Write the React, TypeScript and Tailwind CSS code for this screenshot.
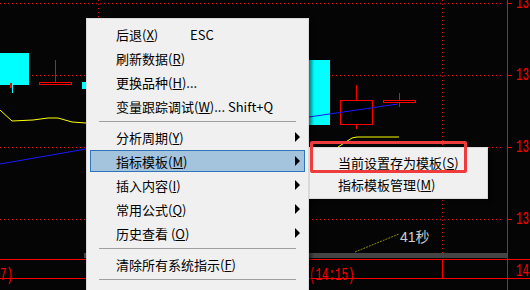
import React from 'react';

type Item =
  | { kind: 'sep' }
  | { kind: 'item'; label: string; key: string; tail?: string; shortcut?: string; sub?: boolean; active?: boolean };

const menu: Item[] = [
  { kind: 'item', label: '后退(', key: 'X', tail: ')', shortcut: 'ESC' },
  { kind: 'item', label: '刷新数据(', key: 'R', tail: ')' },
  { kind: 'item', label: '更换品种(', key: 'H', tail: ')...' },
  { kind: 'item', label: '变量跟踪调试(', key: 'W', tail: ')... Shift+Q' },
  { kind: 'sep' },
  { kind: 'item', label: '分析周期(', key: 'Y', tail: ')', sub: true },
  { kind: 'item', label: '指标模板(', key: 'M', tail: ')', sub: true, active: true },
  { kind: 'item', label: '插入内容(', key: 'I', tail: ')', sub: true },
  { kind: 'item', label: '常用公式(', key: 'Q', tail: ')', sub: true },
  { kind: 'item', label: '历史查看 (', key: 'O', tail: ')', sub: true },
  { kind: 'sep' },
  { kind: 'item', label: '清除所有系统指示(', key: 'F', tail: ')' },
  { kind: 'sep' },
];

const gridY = [3, 75, 147, 219];
const mono = { fontFamily: '"Liberation Mono", monospace' };

function Arrow() {
  return (
    <svg width="6" height="10" viewBox="0 0 6 10" className="ml-auto">
      <polygon points="0,0 5,5 0,10" fill="#000" />
    </svg>
  );
}

function Chart() {
  return (
    <svg width="530" height="290" className="absolute inset-0" shapeRendering="crispEdges">
      {/* grid */}
      {gridY.map((y) => (
        <g key={y}>
          <line x1="0" y1={y + 0.5} x2="503" y2={y + 0.5} stroke="#e01010" strokeDasharray="1 3" />
          <line x1="507" y1={y + 0.5} x2="512" y2={y + 0.5} stroke="#ff0000" />
        </g>
      ))}
      <line x1="98.5" y1="0" x2="98.5" y2="20" stroke="#e01010" strokeDasharray="1 3" />
      <line x1="442.5" y1="0" x2="442.5" y2="259" stroke="#e01010" strokeDasharray="1 3" />
      <line x1="507.5" y1="0" x2="507.5" y2="290" stroke="#ff0000" />
      <line x1="0" y1="259.5" x2="530" y2="259.5" stroke="#ff0000" />
      <line x1="0" y1="278.5" x2="530" y2="278.5" stroke="#ff0000" />
      <line x1="442.5" y1="259" x2="442.5" y2="278" stroke="#ff0000" />
      <rect x="84" y="253" width="423" height="5" fill="#444" />

      {/* candles */}
      <rect x="0" y="53" width="29" height="32" fill="#00ffff" />
      <rect x="10" y="83" width="2" height="5" fill="#ff0000" />
      <line x1="12.5" y1="85" x2="12.5" y2="93" stroke="#00ffff" />
      <line x1="55.5" y1="60" x2="55.5" y2="82" stroke="#ff0000" />
      <rect x="39.5" y="82.5" width="32" height="2" fill="none" stroke="#ff0000" />
      <rect x="82" y="82" width="6" height="7" fill="#00ffff" />
      <rect x="300" y="60" width="30" height="65" fill="#00ffff" />
      <line x1="356.5" y1="85" x2="356.5" y2="129" stroke="#ff0000" />
      <rect x="340.5" y="100.5" width="32" height="24" fill="#000" stroke="#ff0000" />
      <line x1="399.5" y1="93" x2="399.5" y2="107" stroke="#ff0000" />
      <rect x="383.5" y="100.5" width="32" height="2" fill="#000" stroke="#ff0000" />

      {/* indicator lines */}
      <polyline
        points="0,110 12,121 33,120 48,118 58,118 72,122 86,123"
        fill="none"
        stroke="#ffff00"
        shapeRendering="auto"
      />
      <polyline points="338,147 352,138 357,137 399,137" fill="none" stroke="#ffff00" shapeRendering="auto" />
      <polyline points="0,164 86,149 309,117 398,104" fill="none" stroke="#1a1aff" shapeRendering="auto" />
      <line x1="355" y1="252" x2="399" y2="234" stroke="#8a8a10" strokeDasharray="2 1" shapeRendering="auto" />
    </svg>
  );
}

function Label({ text }: { text: string }) {
  return (
    <span
      className="inline-block shrink-0 origin-left scale-x-[0.6] text-[18px] leading-none whitespace-nowrap text-[#ff0000]"
      style={mono}
    >
      {text}
    </span>
  );
}

export default function App() {
  return (
    <div className="relative h-[290px] w-[530px] overflow-hidden bg-[#050505]">
      <Chart />

      {/* price axis */}
      <div className="absolute left-[516px] top-[-6px] flex flex-col">
        {['13', '13', '13', '13'].map((t, i) => (
          <div key={i} className="flex h-[72px] items-start">
            <Label text={t} />
          </div>
        ))}
      </div>

      {/* time axis */}
      <div className="absolute left-0 top-[262px] flex items-start">
        <div className="w-[309px] shrink-0">
          <Label text="7)" />
        </div>
        <div className="w-[207px] shrink-0">
          <Label text="(14:15)" />
        </div>
        <Label text="14" />
      </div>

      <span
        className="absolute left-[400px] top-[230px] text-[14px] leading-none text-[#cfcfcf]"
        style={{ fontFamily: '"Liberation Sans", "Noto Sans CJK SC", sans-serif' }}
      >
        41秒
      </span>

      {/* context menu */}
      <div
        className="absolute left-[86px] top-[18px] w-[223px] border border-[#dadada] bg-[#f0f0f0] px-[3px] pt-[3px] pb-6 text-[13px] leading-none text-black shadow-[3px_3px_3px_rgba(0,0,0,0.45)]"
        style={{ fontFamily: '"Noto Sans CJK SC", "Liberation Sans", sans-serif' }}
      >
        {menu.map((m, i) =>
          m.kind === 'sep' ? (
            <div key={i} className="mx-[9px] flex h-[7px] items-center">
              <div className="h-px w-full bg-[#a0a0a0]" />
            </div>
          ) : (
            <div key={i} className="flex h-6 items-center py-px">
              <div
                className={
                  'flex h-[22px] w-full items-center pl-[25px] pr-[3px] ' +
                  (m.active ? 'border border-[#2f73b8] bg-[#a4c4de]' : 'border border-transparent')
                }
              >
                <span className={m.shortcut ? 'w-[74px]' : ''}>
                  {m.label}
                  <span className="underline underline-offset-1">{m.key}</span>
                  {m.tail}
                </span>
                {m.shortcut && <span>{m.shortcut}</span>}
                {m.sub && <Arrow />}
              </div>
            </div>
          )
        )}
      </div>

      {/* submenu */}
      <div
        className="absolute left-[309px] top-[147px] flex h-[52px] w-[179px] flex-col border border-[#dadada] bg-[#f0f0f0] p-[3px] text-[13px] leading-none text-black shadow-[3px_3px_3px_rgba(0,0,0,0.45)]"
        style={{ fontFamily: '"Noto Sans CJK SC", "Liberation Sans", sans-serif' }}
      >
        <div className="flex h-6 items-center pl-[25px]">
          当前设置存为模板(<span className="underline underline-offset-1">S</span>)
        </div>
        <div className="flex h-6 items-center pl-[25px]">
          指标模板管理(<span className="underline underline-offset-1">M</span>)
        </div>
      </div>

      {/* highlight annotation */}
      <div className="absolute left-[310px] top-[141px] h-[32px] w-[157px] rounded-[2px] border-[3px] border-[#ee3b3b]" />
    </div>
  );
}
